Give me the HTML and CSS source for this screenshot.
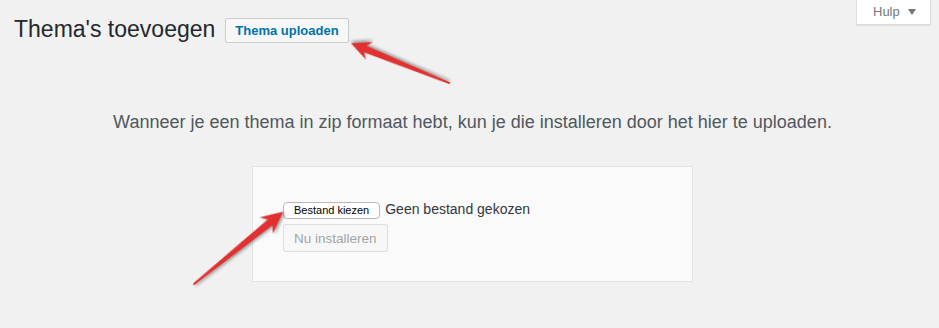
FILE: index.html
```html
<!DOCTYPE html>
<html lang="nl">
<head>
<meta charset="utf-8">
<title>Thema's toevoegen</title>
<link rel="stylesheet" href="styles.css">
</head>
<body>
<div class="wrap">
  <header class="header">
    <div class="title-row">
      <h1 class="page-title">Thema's toevoegen</h1>
      <a class="title-action" href="#">Thema uploaden</a>
    </div>
    <button class="help-tab" type="button">Hulp <span class="caret"></span></button>
  </header>

  <p class="install-help">Wanneer je een thema in zip formaat hebt, kun je die installeren door het hier te uploaden.</p>

  <form class="upload-form">
    <div class="file-row">
      <span class="file-btn">Bestand kiezen</span>
      <span class="file-status">Geen bestand gekozen</span>
    </div>
    <button class="install-btn" type="button" disabled>Nu installeren</button>
  </form>
</div>

<svg class="annotations" width="939" height="328" viewBox="0 0 939 328" aria-hidden="true">
  <g class="arrow" transform="translate(351 43.3) rotate(-158)">
    <path d="M0 0 L-20 -9.5 L-15.5 -3.6 L-106 -0.9 Q-108 0 -106 0.9 L-15.5 3.6 L-20 9.5 Z"/>
  </g>
  <g class="arrow" transform="translate(283.3 211.7) rotate(-39)">
    <path d="M0 0 L-22 -10.5 L-17 -3.8 L-115 -0.9 Q-117 0 -115 0.9 L-17 3.8 L-22 10.5 Z"/>
  </g>
</svg>
</body>
</html>
```

FILE: styles.css
```css
html, body {
  margin: 0;
  padding: 0;
}

body {
  position: relative;
  background: #f1f1f1;
  font-family: "Liberation Sans", Arial, sans-serif;
  color: #23282d;
  width: 939px;
  height: 328px;
  overflow: hidden;
}

.wrap {
  margin: 0 8px 0 14px;
}

.header {
  display: flex;
  justify-content: space-between;
  align-items: flex-start;
}

.title-row {
  display: flex;
  align-items: center;
  gap: 10px;
  padding-top: 15px;
}

.page-title {
  margin: 0;
  font-size: 23px;
  font-weight: 400;
  line-height: 29px;
  color: #23282d;
}

.title-action {
  box-sizing: border-box;
  height: 25px;
  margin-top: 2px;
  padding: 0 9px;
  display: inline-flex;
  align-items: center;
  font-size: 13px;
  font-weight: 700;
  color: #0073aa;
  text-decoration: none;
  background: #f7f7f7;
  border: 1px solid #cccccc;
  border-radius: 2px;
}

.help-tab {
  box-sizing: border-box;
  width: 75px;
  height: 25px;
  padding: 0 0 1px 16px;
  display: flex;
  align-items: center;
  gap: 8px;
  font-family: inherit;
  font-size: 13px;
  color: #72777c;
  background: #ffffff;
  border: 1px solid #dddddd;
  border-top: none;
  box-shadow: 0 1px 1px rgba(0, 0, 0, 0.06);
}

.caret {
  width: 0;
  height: 0;
  border-left: 4px solid transparent;
  border-right: 4px solid transparent;
  border-top: 6px solid #72777c;
  margin-top: 1px;
}

.install-help {
  margin: 66px 0 0;
  text-align: center;
  font-size: 18px;
  line-height: 24px;
  color: #50575e;
}

.upload-form {
  box-sizing: border-box;
  width: 441px;
  margin: 32px auto 0;
  padding: 34px 30px 29px;
  background: #fafafa;
  border: 1px solid #e3e3e3;
}

.file-row {
  display: flex;
  align-items: baseline;
  gap: 5px;
}

.file-btn {
  box-sizing: border-box;
  height: 17px;
  padding: 1px 10px;
  font-size: 11px;
  line-height: 13px;
  color: #000000;
  background: #ffffff;
  border: 1px solid #b8b8b8;
  border-radius: 4px;
}

.file-status {
  font-size: 14px;
  line-height: 17px;
  color: #32373c;
}

.install-btn {
  box-sizing: border-box;
  display: block;
  height: 28px;
  margin-top: 5px;
  padding: 0 10px;
  font-family: inherit;
  font-size: 13.5px;
  color: #a0a5aa;
  background: #f7f7f7;
  border: 1px solid #dddddd;
  border-radius: 3px;
}

.annotations {
  position: absolute;
  top: 0;
  left: 0;
  pointer-events: none;
}

.arrow path {
  fill: #e1302f;
  filter: drop-shadow(1px 2px 1.5px rgba(0, 0, 0, 0.35));
}
```
